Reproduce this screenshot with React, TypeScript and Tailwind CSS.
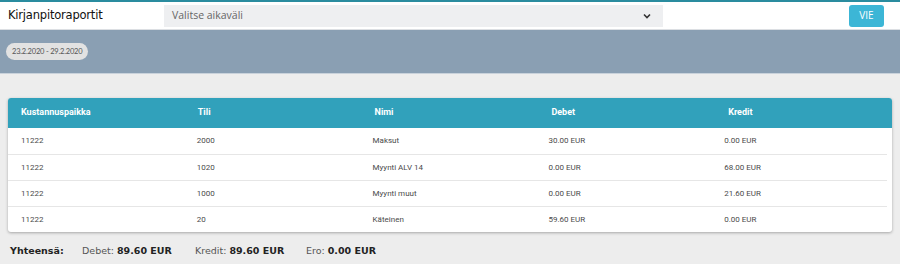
import React from "react";

const rows = [
  { kp: "11222", tili: "2000", nimi: "Maksut", debet: "30.00 EUR", kredit: "0.00 EUR" },
  { kp: "11222", tili: "1020", nimi: "Myynti ALV 14", debet: "0.00 EUR", kredit: "68.00 EUR" },
  { kp: "11222", tili: "1000", nimi: "Myynti muut", debet: "0.00 EUR", kredit: "21.60 EUR" },
  { kp: "11222", tili: "20", nimi: "Käteinen", debet: "59.60 EUR", kredit: "0.00 EUR" },
];

const heading = ["Kustannuspaikka", "Tili", "Nimi", "Debet", "Kredit"];

export default function App() {
  return (
    <div className="w-[900px] h-[264px] overflow-hidden bg-[#ededed] font-['Roboto',sans-serif]">
      {/* top bar */}
      <header className="h-[30px] bg-white border-t-2 border-[#2a8c9f] border-b border-b-[#dcdfe3] flex items-center">
        <h1 className="w-[164px] pl-2 text-[11.5px] text-[#111] font-['DejaVu_Sans',sans-serif] tracking-[-0.2px]">
          Kirjanpitoraportit
        </h1>
        <div className="w-[499px] h-[22px] bg-[#eeeff1] flex items-center justify-between pl-2 pr-[12px]">
          <span className="text-[10.5px] text-[#666] font-['Open_Sans',sans-serif]">Valitse aikaväli</span>
          <svg width="8" height="6" viewBox="0 0 8 6">
            <path d="M1 1.5 L4 4.5 L7 1.5" fill="none" stroke="#333" strokeWidth="1.6" />
          </svg>
        </div>
        <div className="flex-1 flex justify-end pr-[16px]">
          <button className="w-[35px] h-[22px] rounded-[3px] bg-[#3cb6d6] text-white text-[10px] font-['Open_Sans',sans-serif]">
            VIE
          </button>
        </div>
      </header>

      {/* period band */}
      <div className="h-[44px] bg-[#8a9fb3] border-b border-[#c9d2db] flex items-center px-[6px]">
        <span className="h-[17px] px-[6px] rounded-full bg-[#e2e2e2] text-[#555] text-[7.5px] tracking-[-0.2px] flex items-center font-['Lato',sans-serif]">
          23.2.2020 - 29.2.2020
        </span>
      </div>

      {/* table */}
      <div className="mx-2 mt-[24px] bg-white rounded-[3px] shadow-[0_1px_3px_rgba(0,0,0,0.3)] overflow-hidden">
        <div className="grid grid-cols-5 h-[30px] items-center bg-[#31a1bb] text-white text-[9px] font-bold">
          {heading.map((h) => (
            <div key={h} className="pl-[13px]">
              {h}
            </div>
          ))}
        </div>
        {rows.map((r, i) => (
          <div
            key={i}
            className={
              "grid grid-cols-5 h-[26px] items-center text-[8px] text-[#4a4a4a] mr-[5px] " +
              (i > 0 ? "border-t border-[#e6e6e6]" : "")
            }
          >
            <div className="pl-[13px]">{r.kp}</div>
            <div className="pl-[13px]">{r.tili}</div>
            <div className="pl-[13px]">{r.nimi}</div>
            <div className="pl-[13px]">{r.debet}</div>
            <div className="pl-[13px]">{r.kredit}</div>
          </div>
        ))}
      </div>

      {/* totals */}
      <div className="flex items-center h-[38px] pl-[10px] text-[9.5px] text-[#222] font-['DejaVu_Sans',sans-serif]">
        <span className="font-bold w-[72px]">Yhteensä:</span>
        <span className="w-[113px] text-[#555]">
          Debet: <b className="text-[#222]">89.60 EUR</b>
        </span>
        <span className="w-[111px] text-[#555]">
          Kredit: <b className="text-[#222]">89.60 EUR</b>
        </span>
        <span className="text-[#555]">
          Ero: <b className="text-[#222]">0.00 EUR</b>
        </span>
      </div>
    </div>
  );
}
